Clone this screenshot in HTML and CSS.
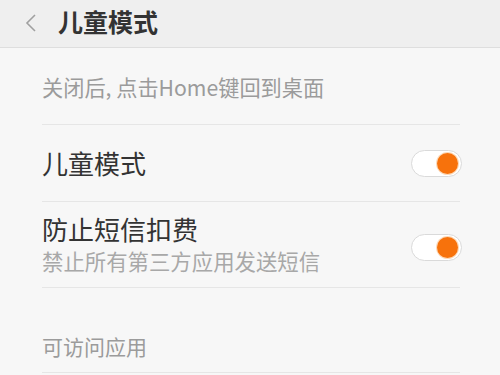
FILE: index.html
```html
<!DOCTYPE html>
<html lang="zh">
<head>
<meta charset="utf-8">
<link rel="stylesheet" href="styles.css">
</head>
<body>
<header class="topbar">
  <svg class="back" width="14" height="20" viewBox="0 0 14 20"><path d="M11 2 L3 10 L11 18" fill="none" stroke="#a0a0a0" stroke-width="1.6"/></svg>
  <h1 class="title">儿童模式</h1>
</header>
<main class="content">
  <div class="note">关闭后, 点击Home键回到桌面</div>
  <div class="row row-single">
    <div class="row-text"><div class="row-title">儿童模式</div></div>
    <div class="toggle"><span class="knob"></span></div>
  </div>
  <div class="row row-double">
    <div class="row-text">
      <div class="row-title">防止短信扣费</div>
      <div class="row-sub">禁止所有第三方应用发送短信</div>
    </div>
    <div class="toggle"><span class="knob"></span></div>
  </div>
  <div class="section">可访问应用</div>
</main>
</body>
</html>
```
FILE: styles.css
```css
html, body {
  margin: 0;
  padding: 0;
}
body {
  width: 500px;
  height: 375px;
  overflow: hidden;
  background: #f7f7f7;
  font-family: "Noto Sans CJK SC", "Noto Sans", sans-serif;
}
.topbar {
  height: 47px;
  background: #efefef;
  border-bottom: 1px solid #dedede;
  display: flex;
  align-items: center;
  padding-left: 24px;
}
.back {
  display: block;
  margin-top: -2px;
}
.title {
  margin: 0 0 0 20px;
  font-size: 25px;
  font-weight: bold;
  color: #333;
  line-height: 30px;
  margin-top: -5px;
}
.content {
  padding: 0 38px 0 42px;
  border-left: 1px solid #e6e6e6;
  margin-left: -1px;
  height: 327px;
}
.note {
  height: 77px;
  box-sizing: border-box;
  padding-top: 25px;
  font-size: 21.2px;
  line-height: 28px;
  color: #9b9b9b;
  border-bottom: 1px solid #e6e6e6;
  margin-right: 2px;
}
.row {
  display: flex;
  align-items: center;
  justify-content: space-between;
  border-bottom: 1px solid #e6e6e6;
  margin-right: 2px;
}
.row .toggle {
  margin-right: -2px;
}
.row-single {
  height: 76px;
}
.row-double {
  height: 85px;
}
.row-title {
  font-size: 26px;
  line-height: 32px;
  color: #333;
}
.row-double .row-text {
  margin-top: 0;
}
.row-double .toggle {
  margin-top: 5px;
}
.row-sub {
  font-size: 21.4px;
  line-height: 30px;
  color: #a8a8a8;
  margin-top: 1px;
}
.toggle {
  width: 51px;
  height: 27px;
  box-sizing: border-box;
  border: 1px solid #dadada;
  border-radius: 14px;
  background: #fff;
  display: flex;
  align-items: center;
  justify-content: flex-end;
  padding-right: 3px;
}
.knob {
  width: 21px;
  height: 21px;
  border-radius: 50%;
  background: #f7720c;
  box-shadow: 0 0 0 1px #fcd9b8;
}
.section {
  height: 85px;
  box-sizing: border-box;
  padding-top: 44px;
  font-size: 21px;
  line-height: 28px;
  color: #9b9b9b;
  border-bottom: 1px solid #e6e6e6;
  margin-right: 2px;
}
```
